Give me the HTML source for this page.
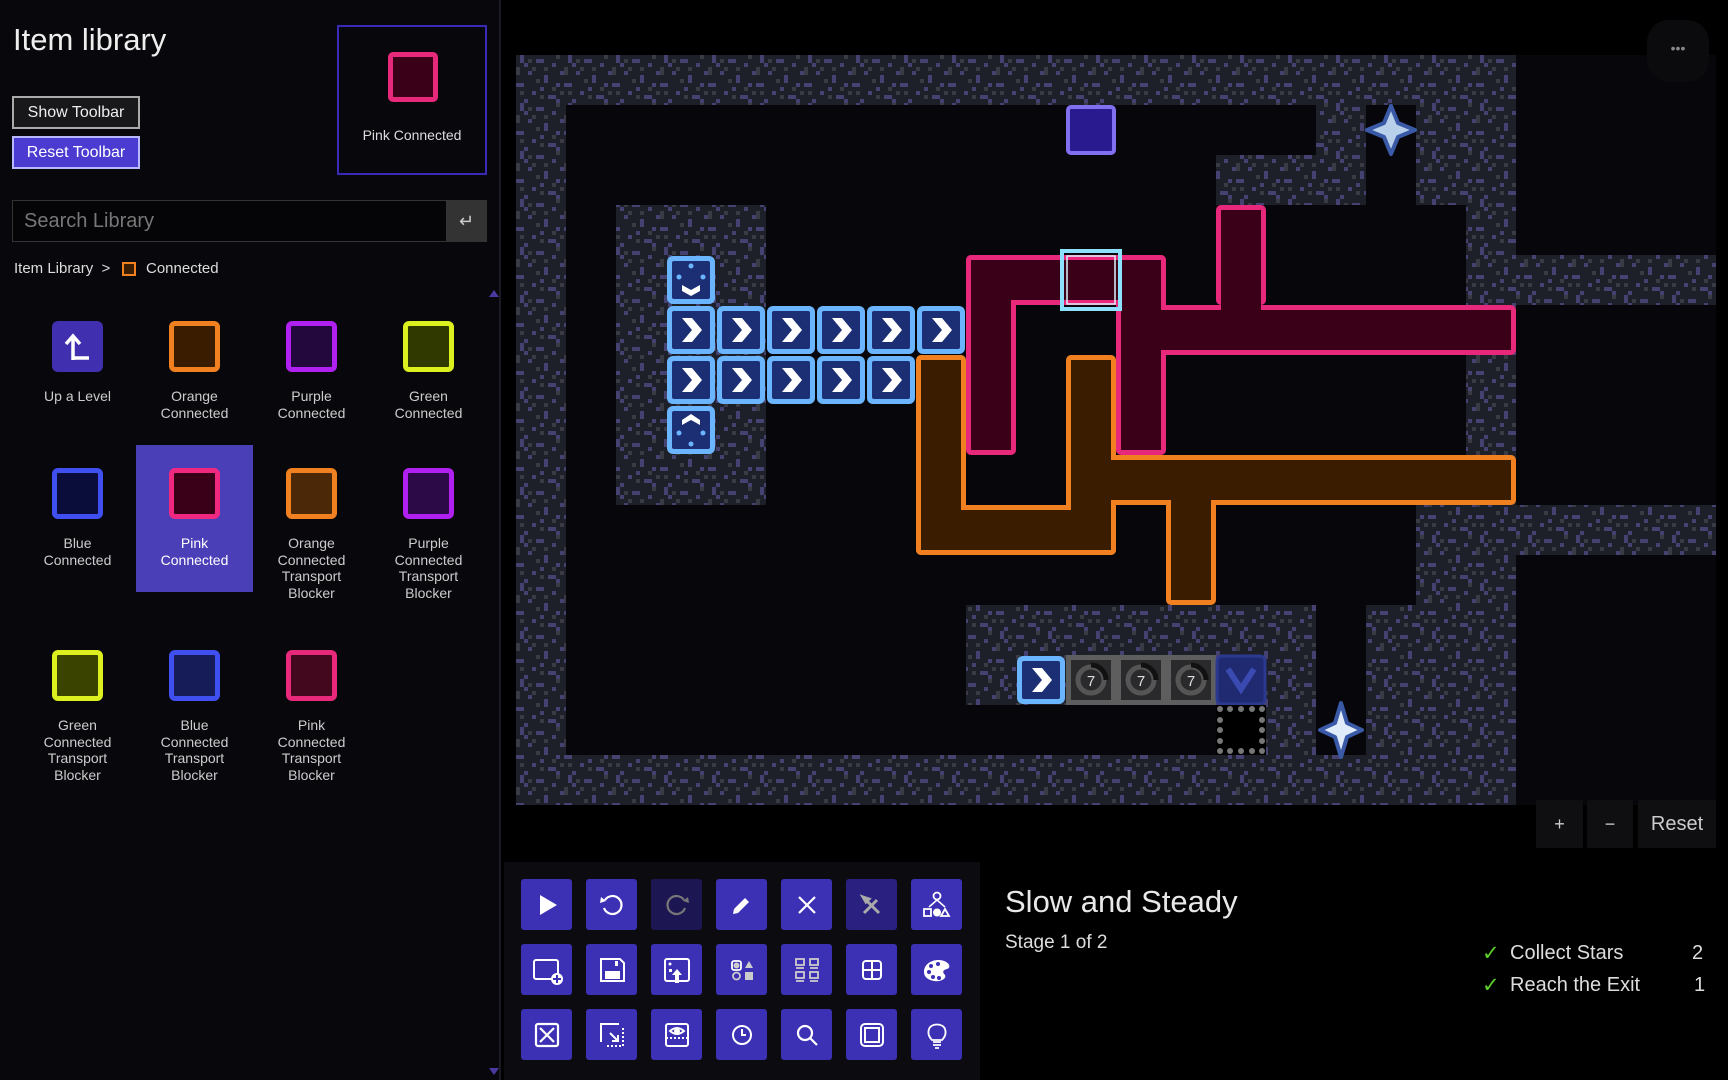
<!DOCTYPE html>
<html><head><meta charset="utf-8">
<style>
*{margin:0;padding:0;box-sizing:border-box}
body{width:1728px;height:1080px;background:#000;overflow:hidden;position:relative;font-family:"Liberation Sans",sans-serif;color:#ddd}
.side{position:absolute;left:0;top:0;width:501px;height:1080px;background:#08080c;border-right:2px solid #1a1a22}
.abs{position:absolute}
.btn{position:absolute;font-size:16px;display:flex;align-items:center;justify-content:center}
.item{position:absolute;width:117px;text-align:center;font-size:14px;line-height:16.5px;color:#ccc}
.ico{width:51px;height:51px;margin:0 auto 16px;border-radius:6px;border:5px solid}
.tb{position:absolute;width:51px;height:51px;background:#3c30b4;border-radius:3px;display:flex;align-items:center;justify-content:center}
.tb svg{width:34px;height:34px}
</style></head><body>
<div class="side">
  <div class="abs" style="left:13px;top:22px;font-size:31px;color:#eee">Item library</div>
  <div class="btn" style="left:12px;top:96px;width:128px;height:33px;background:#18181a;border:2px solid #aaa;color:#eee">Show Toolbar</div>
  <div class="btn" style="left:12px;top:136px;width:128px;height:33px;background:#4b3bd0;border:2px solid #b8b8ff;color:#fff">Reset Toolbar</div>
  <div class="abs" style="left:337px;top:25px;width:150px;height:150px;border:2px solid #3a2ab8">
    <div class="abs" style="left:49px;top:25px;width:50px;height:50px;border:5px solid #e8287a;background:#3a0018;border-radius:5px"></div>
    <div class="abs" style="left:0;top:100px;width:146px;text-align:center;font-size:14px;color:#ddd">Pink Connected</div>
  </div>
  <div class="abs" style="left:12px;top:200px;width:475px;height:42px;background:#050508;border:1px solid #333"></div>
  <div class="abs" style="left:24px;top:210px;font-size:20px;color:#777">Search Library</div>
  <div class="abs" style="left:446px;top:200px;width:41px;height:42px;background:#333;color:#ccc;font-size:18px;text-align:center;line-height:42px">↵</div>
  <div class="abs" style="left:14px;top:260px;font-size:15px;color:#ddd">Item Library &nbsp;&gt;&nbsp;&nbsp;</div>
  <div class="abs" style="left:122px;top:262px;width:14px;height:14px;border:2px solid #f08020;background:#3a1c00"></div>
  <div class="abs" style="left:146px;top:260px;font-size:15px;color:#ddd">Connected</div>
  <div class="abs" style="left:489px;top:290px;width:0;height:0;border-left:5px solid transparent;border-right:5px solid transparent;border-bottom:7px solid #4a3aa0"></div>
  <div class="abs" style="left:489px;top:1068px;width:0;height:0;border-left:5px solid transparent;border-right:5px solid transparent;border-top:7px solid #4a3aa0"></div>

  <div class="abs" style="left:136px;top:445px;width:117px;height:147px;background:#4b3fb8"></div>

  <div class="item" style="left:19px;top:321px"><div class="ico" style="border:none;background:#4030b0;display:flex;align-items:center;justify-content:center"><svg width="34" height="34" viewBox="0 0 34 34"><path d="M12 30V8M5 14l7-8 7 8M12 28h16" stroke="#fff" stroke-width="3.5" fill="none"/></svg></div>Up a Level</div>
  <div class="item" style="left:136px;top:321px"><div class="ico" style="border-color:#f08020;background:#3a1c00"></div>Orange<br>Connected</div>
  <div class="item" style="left:253px;top:321px"><div class="ico" style="border-color:#b020f0;background:#22083c"></div>Purple<br>Connected</div>
  <div class="item" style="left:370px;top:321px"><div class="ico" style="border-color:#dcf020;background:#303a00"></div>Green<br>Connected</div>

  <div class="item" style="left:19px;top:468px"><div class="ico" style="border-color:#4050f0;background:#0a0c3a"></div>Blue<br>Connected</div>
  <div class="item" style="left:136px;top:468px;color:#fff"><div class="ico" style="border-color:#f02880;background:#3a0018"></div>Pink<br>Connected</div>
  <div class="item" style="left:253px;top:468px"><div class="ico" style="border-color:#f08020;background:#4a2808"></div>Orange<br>Connected<br>Transport<br>Blocker</div>
  <div class="item" style="left:370px;top:468px"><div class="ico" style="border-color:#b020f0;background:#2c0a48"></div>Purple<br>Connected<br>Transport<br>Blocker</div>

  <div class="item" style="left:19px;top:650px"><div class="ico" style="border-color:#dcf020;background:#3a4400"></div>Green<br>Connected<br>Transport<br>Blocker</div>
  <div class="item" style="left:136px;top:650px"><div class="ico" style="border-color:#4050f0;background:#161c58"></div>Blue<br>Connected<br>Transport<br>Blocker</div>
  <div class="item" style="left:253px;top:650px"><div class="ico" style="border-color:#e8287a;background:#44081e"></div>Pink<br>Connected<br>Transport<br>Blocker</div>
</div>

<svg class="abs" style="left:516px;top:55px" width="1200" height="750" viewBox="0 0 1200 750">
<defs>
<pattern id="n" width="48" height="48" patternUnits="userSpaceOnUse">
<rect width="48" height="48" fill="#1e2029"/>
<g fill="#454272">
<rect x="4" y="0" width="4" height="8"/><rect x="20" y="4" width="8" height="4"/><rect x="36" y="8" width="4" height="4"/><rect x="12" y="16" width="4" height="4"/><rect x="28" y="20" width="4" height="8"/><rect x="0" y="28" width="8" height="4"/><rect x="40" y="28" width="4" height="4"/><rect x="16" y="36" width="4" height="4"/><rect x="32" y="40" width="8" height="4"/><rect x="8" y="44" width="4" height="4"/><rect x="44" y="16" width="4" height="4"/><rect x="24" y="32" width="4" height="4"/><rect x="8" y="8" width="4" height="4"/><rect x="40" y="44" width="4" height="4"/>
</g>
<g fill="#3a3a44">
<rect x="12" y="4" width="4" height="4"/><rect x="28" y="12" width="4" height="4"/><rect x="0" y="12" width="4" height="8"/><rect x="20" y="24" width="4" height="4"/><rect x="36" y="32" width="4" height="4"/><rect x="4" y="36" width="4" height="4"/><rect x="24" y="40" width="4" height="4"/><rect x="40" y="0" width="4" height="4"/><rect x="16" y="12" width="4" height="4"/><rect x="44" y="36" width="4" height="4"/>
</g>
</pattern>
</defs>
<rect width="1200" height="750" fill="#07070b"/>
<g fill="url(#n)">
<rect x="0" y="0" width="1000" height="50"/>
<rect x="0" y="0" width="50" height="750"/>
<rect x="0" y="700" width="1000" height="50"/>
<rect x="100" y="150" width="150" height="300"/>
<rect x="800" y="50" width="50" height="50"/>
<rect x="700" y="100" width="150" height="50"/>
<rect x="900" y="50" width="100" height="100"/>
<rect x="950" y="50" width="50" height="650"/>
<rect x="950" y="200" width="250" height="50"/>
<rect x="900" y="450" width="300" height="50"/>
<rect x="900" y="450" width="100" height="100"/>
<rect x="850" y="550" width="150" height="150"/>
<rect x="450" y="550" width="350" height="100"/>
<rect x="750" y="650" width="50" height="50"/>
</g>
<rect x="552" y="52" width="46" height="46" rx="3" fill="#2a1a90" stroke="#8070f0" stroke-width="4"/>
<g stroke="#3a5aa8" stroke-width="4" fill="#b8d0ea" stroke-linejoin="round">
<path d="M875 51 L882 68 L899 75 L882 82 L875 99 L868 82 L851 75 L868 68Z"/>
<path d="M825 648 L831 668 L846 675 L831 682 L825 702 L819 682 L804 675 L819 668Z" fill="#e0ecfa"/>
</g>
<g fill="#e8287a">
<rect x="450" y="200" width="200" height="50" rx="5"/><rect x="450" y="200" width="50" height="200" rx="5"/><rect x="600" y="200" width="50" height="200" rx="5"/><rect x="600" y="250" width="400" height="50" rx="5"/><rect x="700" y="150" width="50" height="100" rx="5"/>
</g>
<g fill="#3a0018">
<rect x="455" y="205" width="190" height="40"/><rect x="455" y="205" width="40" height="190"/><rect x="605" y="205" width="40" height="190"/><rect x="605" y="255" width="390" height="40"/><rect x="705" y="155" width="40" height="105"/>
</g>
<g fill="#f08020">
<rect x="400" y="300" width="50" height="200" rx="5"/><rect x="400" y="450" width="200" height="50" rx="5"/><rect x="550" y="300" width="50" height="200" rx="5"/><rect x="550" y="400" width="450" height="50" rx="5"/><rect x="650" y="400" width="50" height="150" rx="5"/>
</g>
<g fill="#3a1c00">
<rect x="405" y="305" width="40" height="190"/><rect x="405" y="455" width="190" height="40"/><rect x="555" y="305" width="40" height="190"/><rect x="555" y="405" width="440" height="40"/><rect x="655" y="405" width="40" height="140"/>
</g>
<rect x="546" y="196" width="58" height="58" fill="none" stroke="#8ee0ff" stroke-width="4"/>
<rect x="551" y="201" width="48" height="48" fill="none" stroke="#dff6ff" stroke-width="1.5"/>
<g>
<rect x="151" y="201" width="48" height="48" rx="6" fill="#6bb5ff"/><rect x="156" y="206" width="38" height="38" rx="2" fill="#1c2f74"/>
<path d="M166 230 L175 235 L184 230 L184 236 L175 241 L166 236Z" fill="#fff"/>
<circle cx="175" cy="211" r="2.5" fill="#6bb5ff"/><circle cx="163" cy="222" r="2.5" fill="#6bb5ff"/><circle cx="187" cy="222" r="2.5" fill="#6bb5ff"/>
</g>
<g>
<rect x="151" y="351" width="48" height="48" rx="6" fill="#6bb5ff"/><rect x="156" y="356" width="38" height="38" rx="2" fill="#1c2f74"/>
<path d="M166 365 L175 359 L184 365 L184 370 L175 365 L166 370Z" fill="#fff"/>
<circle cx="175" cy="389" r="2.5" fill="#6bb5ff"/><circle cx="163" cy="378" r="2.5" fill="#6bb5ff"/><circle cx="187" cy="378" r="2.5" fill="#6bb5ff"/>
</g>
<g id="ar">
<rect x="151" y="251" width="48" height="48" rx="6" fill="#6bb5ff"/><rect x="156" y="256" width="38" height="38" rx="2" fill="#1c2f74"/>
<path d="M166 263 L176 263 L186 275 L176 287 L166 287 L176 275Z" fill="#fff"/>
</g>
<use href="#ar" x="50"/><use href="#ar" x="100"/><use href="#ar" x="150"/><use href="#ar" x="200"/><use href="#ar" x="250"/>
<use href="#ar" y="50"/><use href="#ar" x="50" y="50"/><use href="#ar" x="100" y="50"/><use href="#ar" x="150" y="50"/><use href="#ar" x="200" y="50"/>
<use href="#ar" x="350" y="350"/>
<rect x="550" y="600" width="150" height="50" fill="#5e5e5e"/>
<g id="tm"><rect x="555" y="605" width="40" height="40" fill="#2a2a2c"/><circle cx="575" cy="625" r="13" fill="none" stroke="#555" stroke-width="5"/><path d="M575 610 A15 15 0 0 1 590 625" stroke="#111" stroke-width="5" fill="none"/><text x="575" y="631" font-size="15" fill="#ddd" text-anchor="middle" font-family="Liberation Sans">7</text></g>
<use href="#tm" x="50"/><use href="#tm" x="100"/>
<rect x="701" y="601" width="48" height="48" rx="5" fill="#1f2a70" stroke="#2b3a90" stroke-width="3"/>
<path d="M712 614 L725 634 L738 614" stroke="#3a4ab0" stroke-width="6" fill="none"/>
<rect x="700" y="650" width="50" height="50" fill="#000"/>
<g fill="#777">
<circle cx="704" cy="654" r="3"/><circle cx="714" cy="654" r="3"/><circle cx="725" cy="654" r="3"/><circle cx="736" cy="654" r="3"/><circle cx="746" cy="654" r="3"/>
<circle cx="704" cy="696" r="3"/><circle cx="714" cy="696" r="3"/><circle cx="725" cy="696" r="3"/><circle cx="736" cy="696" r="3"/><circle cx="746" cy="696" r="3"/>
<circle cx="704" cy="665" r="3"/><circle cx="704" cy="675" r="3"/><circle cx="704" cy="686" r="3"/>
<circle cx="746" cy="665" r="3"/><circle cx="746" cy="675" r="3"/><circle cx="746" cy="686" r="3"/>
</g>
</svg>

<div class="abs" style="left:1647px;top:20px;width:62px;height:62px;border-radius:22px;background:#0b0b0e;color:#888;text-align:center;line-height:56px;font-size:14px">•••</div>
<div class="abs" style="left:1536px;top:800px;width:47px;height:48px;background:#0f0f12;color:#ccc;text-align:center;line-height:48px;font-size:18px">+</div>
<div class="abs" style="left:1587px;top:800px;width:46px;height:48px;background:#0f0f12;color:#ccc;text-align:center;line-height:48px;font-size:18px">−</div>
<div class="abs" style="left:1638px;top:800px;width:78px;height:48px;background:#0f0f12;color:#ccc;text-align:center;line-height:48px;font-size:20px">Reset</div>

<div class="abs" style="left:504px;top:862px;width:476px;height:218px;background:#0b0b10"></div>
<div class="tb" style="left:521px;top:879px"><svg viewBox="0 0 34 34"><path d="M10 7L27 17L10 27Z" fill="#fff"/></svg></div>
<div class="tb" style="left:586px;top:879px"><svg viewBox="0 0 34 34"><path d="M10 12A9 9 0 1 1 9 20" stroke="#fff" stroke-width="2.2" fill="none"/><path d="M6 9L11 13L5 15Z" fill="#fff"/></svg></div>
<div class="tb" style="left:651px;top:879px;background:#1c1652"><svg viewBox="0 0 34 34"><path d="M24 12A9 9 0 1 0 25 20" stroke="#777" stroke-width="2.2" fill="none"/><path d="M28 9L23 13L29 15Z" fill="#777"/></svg></div>
<div class="tb" style="left:716px;top:879px"><svg viewBox="0 0 34 34"><path d="M9 21L20 10L24 14L13 25Z" fill="#fff"/><path d="M9 21L13 25L8 26Z" fill="#fff"/></svg></div>
<div class="tb" style="left:781px;top:879px"><svg viewBox="0 0 34 34"><path d="M9 9L25 25M25 9L9 25" stroke="#fff" stroke-width="2.2"/></svg></div>
<div class="tb" style="left:846px;top:879px;background:#2a2080"><svg viewBox="0 0 34 34"><path d="M9 25L22 12M11 12L24 25M8 9l6 2-3 3z" stroke="#aaa" stroke-width="3" fill="#aaa"/></svg></div>
<div class="tb" style="left:911px;top:879px"><svg viewBox="0 0 34 34"><circle cx="17" cy="8" r="3.5" stroke="#fff" stroke-width="1.8" fill="none"/><path d="M17 12L9 19M17 12L25 19" stroke="#fff" stroke-width="1.5"/><rect x="4" y="21" width="7" height="7" stroke="#fff" stroke-width="1.8" fill="none"/><circle cx="17" cy="24.5" r="4" fill="#fff"/><path d="M25 21L29 28H21Z" stroke="#fff" stroke-width="1.8" fill="none"/></svg></div>
<div class="tb" style="left:521px;top:944px"><svg viewBox="0 0 34 34"><rect x="4" y="7" width="24" height="19" rx="2" stroke="#fff" stroke-width="2" fill="none"/><circle cx="27" cy="26" r="6" fill="#fff"/><path d="M27 22v8M23 26h8" stroke="#3c30b4" stroke-width="2"/></svg></div>
<div class="tb" style="left:586px;top:944px"><svg viewBox="0 0 34 34"><path d="M6 6H25L29 10V28H6Z" stroke="#fff" stroke-width="2" fill="none"/><rect x="10" y="18" width="15" height="8" fill="#fff"/><rect x="20" y="8" width="3" height="5" fill="#fff"/></svg></div>
<div class="tb" style="left:651px;top:944px"><svg viewBox="0 0 34 34"><rect x="5" y="6" width="24" height="22" rx="2" stroke="#fff" stroke-width="2" fill="none"/><path d="M17 16L22 22H19V30H15V22H12Z" fill="#fff"/><circle cx="10" cy="11" r="1.5" fill="#fff"/><rect x="9" y="16" width="3" height="3" fill="#fff"/></svg></div>
<div class="tb" style="left:716px;top:944px"><svg viewBox="0 0 34 34"><rect x="7" y="8" width="9" height="9" rx="2" stroke="#fff" stroke-width="1.8" fill="none"/><circle cx="11.5" cy="12.5" r="3" fill="#ccc"/><path d="M24 8L28 15H20Z" fill="#ccc"/><circle cx="11.5" cy="23" r="3.5" stroke="#ccc" stroke-width="1.8" fill="none"/><rect x="20" y="19" width="8" height="8" fill="#ccc"/></svg></div>
<div class="tb" style="left:781px;top:944px"><svg viewBox="0 0 34 34" stroke="#ccc" stroke-width="1.8" fill="none"><rect x="6" y="6" width="8" height="6"/><rect x="20" y="6" width="8" height="6"/><rect x="6" y="19" width="8" height="6"/><rect x="20" y="19" width="8" height="6"/><path d="M6 15h8M20 15h8M6 28h8M20 28h8"/></svg></div>
<div class="tb" style="left:846px;top:944px"><svg viewBox="0 0 34 34" stroke="#fff" stroke-width="2" fill="none"><rect x="8" y="8" width="18" height="18" rx="3"/><path d="M17 8v18M8 17h18"/></svg></div>
<div class="tb" style="left:911px;top:944px"><svg viewBox="0 0 34 34"><path d="M4 19C4 9 16 5 24 8C30 10 31 15 27 16C23 17 22 19 25 22C27 26 20 29 14 28C8 27 4 24 4 19Z" fill="#fff"/><g fill="#3c30b4"><circle cx="9" cy="19" r="2"/><circle cx="13" cy="24" r="2"/><circle cx="19" cy="25" r="2"/><circle cx="11" cy="13" r="2"/><circle cx="18" cy="11" r="2"/></g></svg></div>
<div class="tb" style="left:521px;top:1009px"><svg viewBox="0 0 34 34" stroke="#fff" stroke-width="2.2" fill="none"><rect x="6" y="6" width="22" height="22" rx="2"/><path d="M10 10L24 24M24 10L10 24"/></svg></div>
<div class="tb" style="left:586px;top:1009px"><svg viewBox="0 0 34 34" stroke="#fff" stroke-width="2" fill="none"><path d="M6 24V6H24"/><path d="M28 10V28H10" stroke-dasharray="2 2"/><path d="M15 15L23 23M23 17V23H17"/></svg></div>
<div class="tb" style="left:651px;top:1009px"><svg viewBox="0 0 34 34" stroke="#fff" stroke-width="2" fill="none"><rect x="6" y="6" width="22" height="22" rx="2"/><path d="M6 20h22" stroke-dasharray="2 2"/><path d="M10 13Q17 7 24 13Q17 19 10 13Z"/><circle cx="17" cy="13" r="2" fill="#fff"/></svg></div>
<div class="tb" style="left:716px;top:1009px"><svg viewBox="0 0 34 34" stroke="#fff" stroke-width="2" fill="none"><circle cx="17" cy="17" r="9"/><path d="M17 11v6h4"/></svg></div>
<div class="tb" style="left:781px;top:1009px"><svg viewBox="0 0 34 34" stroke="#fff" stroke-width="2.2" fill="none"><circle cx="15" cy="15" r="7"/><path d="M20 20L27 27"/></svg></div>
<div class="tb" style="left:846px;top:1009px"><svg viewBox="0 0 34 34" stroke="#fff" stroke-width="2" fill="none"><rect x="6" y="6" width="22" height="22" rx="4"/><rect x="10" y="10" width="14" height="14"/></svg></div>
<div class="tb" style="left:911px;top:1009px"><svg viewBox="0 0 34 34" stroke="#fff" stroke-width="1.8" fill="none"><path d="M12 22C8 18 8 14 9 11C11 5 23 5 25 11C26 14 26 18 22 22Z"/><path d="M13 24h8M13 27h8M15 30h4"/></svg></div>

<div class="abs" style="left:1005px;top:884px;font-size:31px;color:#e8e8e8">Slow and Steady</div>
<div class="abs" style="left:1005px;top:932px;font-size:19px;color:#ddd">Stage 1 of 2</div>
<div class="abs" style="left:1482px;top:941px;font-size:21px;color:#5dcf2a">✓</div>
<div class="abs" style="left:1510px;top:942px;font-size:20px;color:#ddd">Collect Stars</div>
<div class="abs" style="left:1692px;top:942px;font-size:20px;color:#ddd">2</div>
<div class="abs" style="left:1482px;top:973px;font-size:21px;color:#5dcf2a">✓</div>
<div class="abs" style="left:1510px;top:974px;font-size:20px;color:#ddd">Reach the Exit</div>
<div class="abs" style="left:1694px;top:974px;font-size:20px;color:#ddd">1</div>
</body></html>
